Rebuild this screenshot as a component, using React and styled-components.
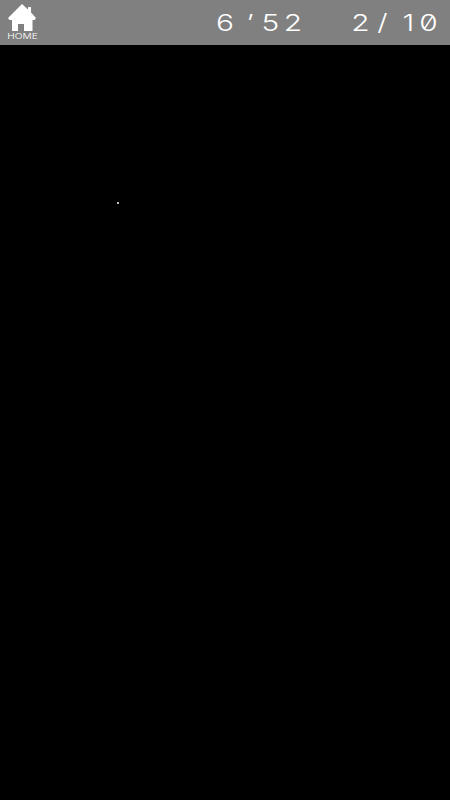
import React from 'react';
import styled, { createGlobalStyle } from 'styled-components';

const GlobalStyle = createGlobalStyle`
  html, body {
    margin: 0;
    padding: 0;
    background: #000;
  }
`;

const Screen = styled.div`
  position: relative;
  width: 450px;
  height: 800px;
  background: #000;
  overflow: hidden;
`;

const TopBar = styled.header`
  display: flex;
  align-items: center;
  height: 45px;
  padding: 0 12px 0 7px;
  box-sizing: border-box;
  background: #808080;
`;

const HomeButton = styled.div`
  display: flex;
  flex-direction: column;
  align-items: center;
  align-self: flex-start;
  width: 31px;
  padding-top: 4px;
  color: #fff;
`;

const HomeLabel = styled.span`
  display: block;
  margin-top: 2px;
  font: 300 7px/8px "Inter", "Liberation Sans", sans-serif;
  transform: scaleX(1.45);
`;

const Readouts = styled.div`
  display: flex;
  margin-left: auto;
  gap: 50px;
`;

const Readout = styled.div`
  display: flex;
  color: #fff;
  font: 300 23px/24px "Inter", "Liberation Sans", sans-serif;
  font-feature-settings: "zero" 1;
`;

const Glyph = styled.span`
  display: block;
  width: ${(p) => p.$width}px;
  margin-left: ${(p) => p.$gap || 0}px;
  text-align: center;
  white-space: pre;
  transform: scaleX(1.3);
`;

const Star = styled.div`
  position: absolute;
  left: 117px;
  top: 202px;
  width: 2px;
  height: 2px;
  background: #bdbdbd;
`;

const HomeIcon = () => (
  <svg width="31" height="27" viewBox="7 4 31 27" fill="currentColor">
    <path d="M22 4 L28 9.500 V7 H31 V12.500 L36 18 L34.500 20 H32.500 V31 H24 V24 H18 V31 H12 V20 H9.500 L8 18 Z" />
  </svg>
);

const App = () => (
  <>
    <GlobalStyle />
    <Screen>
      <TopBar>
        <HomeButton>
          <HomeIcon />
          <HomeLabel>HOME</HomeLabel>
        </HomeButton>
        <Readouts>
          <Readout>
            <Glyph $width={18}>6</Glyph>
            <Glyph $width={4} $gap={13}>’</Glyph>
            <Glyph $width={19} $gap={10}>5</Glyph>
            <Glyph $width={18} $gap={4}>2</Glyph>
          </Readout>
          <Readout>
            <Glyph $width={17}>2</Glyph>
            <Glyph $width={9} $gap={9}>/</Glyph>
            <Glyph $width={3} $gap={16}>1</Glyph>
            <Glyph $width={19} $gap={13}>0</Glyph>
          </Readout>
        </Readouts>
      </TopBar>
      <Star />
    </Screen>
  </>
);

export default App;
